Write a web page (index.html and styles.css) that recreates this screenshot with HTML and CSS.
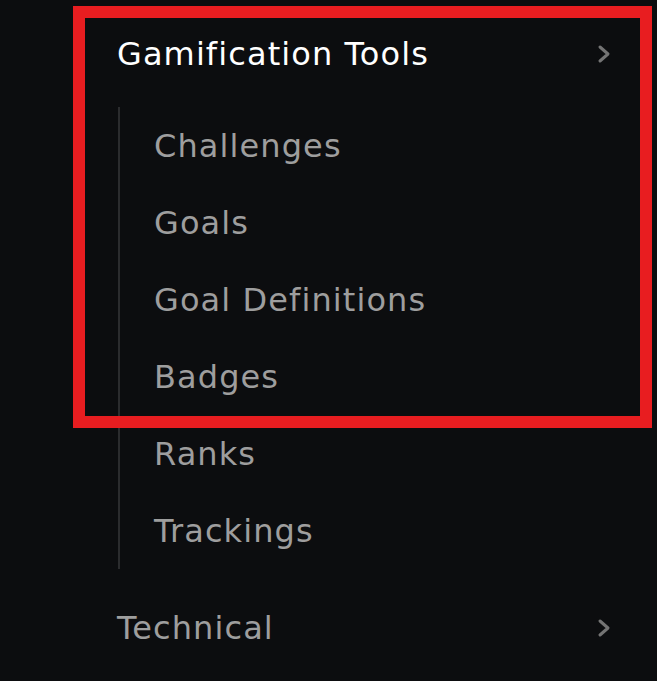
FILE: index.html
```html
<!DOCTYPE html>
<html>
<head>
<meta charset="utf-8">
<link rel="stylesheet" href="styles.css">
</head>
<body>
<nav class="menu">
  <div class="group">
    <div class="row title active">
      <span class="label">Gamification Tools</span>
      <svg class="chev" width="16" height="20" viewBox="0 0 16 20"><path d="M3 3 L11 10 L3 17" fill="none" stroke="currentColor" stroke-width="3" stroke-linecap="round" stroke-linejoin="round"/></svg>
    </div>
    <ul class="sub">
      <li>Challenges</li>
      <li>Goals</li>
      <li>Goal Definitions</li>
      <li>Badges</li>
      <li>Ranks</li>
      <li>Trackings</li>
    </ul>
  </div>
  <div class="row title tech">
    <span class="label">Technical</span>
    <svg class="chev" width="16" height="20" viewBox="0 0 16 20"><path d="M3 3 L11 10 L3 17" fill="none" stroke="currentColor" stroke-width="3" stroke-linecap="round" stroke-linejoin="round"/></svg>
  </div>
  <div class="highlight"></div>
</nav>
</body>
</html>
```
FILE: styles.css
```css
html, body {
  margin: 0;
  padding: 0;
  background: #0c0d0f;
  height: 100%;
  overflow: hidden;
}
.menu {
  position: relative;
  padding-left: 117px;
  padding-right: 44px;
  font-family: "DejaVu Sans", "Noto Sans", sans-serif;
  font-size: 32px;
  letter-spacing: 1.1px;
  color: #9e9e9e;
}
.row {
  display: flex;
  align-items: center;
  justify-content: space-between;
}
.title {
  height: 107px;
}
.title.active {
  color: #ffffff;
}
.chev {
  color: #747474;
  display: block;
}
.sub {
  list-style: none;
  margin: 0 0 0 1px;
  padding: 0 0 0 34px;
  border-left: 2px solid #2b2c2e;
}
.sub li {
  height: 77px;
  display: flex;
  align-items: center;
}
.tech {
  height: 118px;
}
.highlight {
  position: absolute;
  left: 73px;
  top: 6px;
  width: 555px;
  height: 398px;
  border: 12px solid #e81d20;
  pointer-events: none;
}
```
